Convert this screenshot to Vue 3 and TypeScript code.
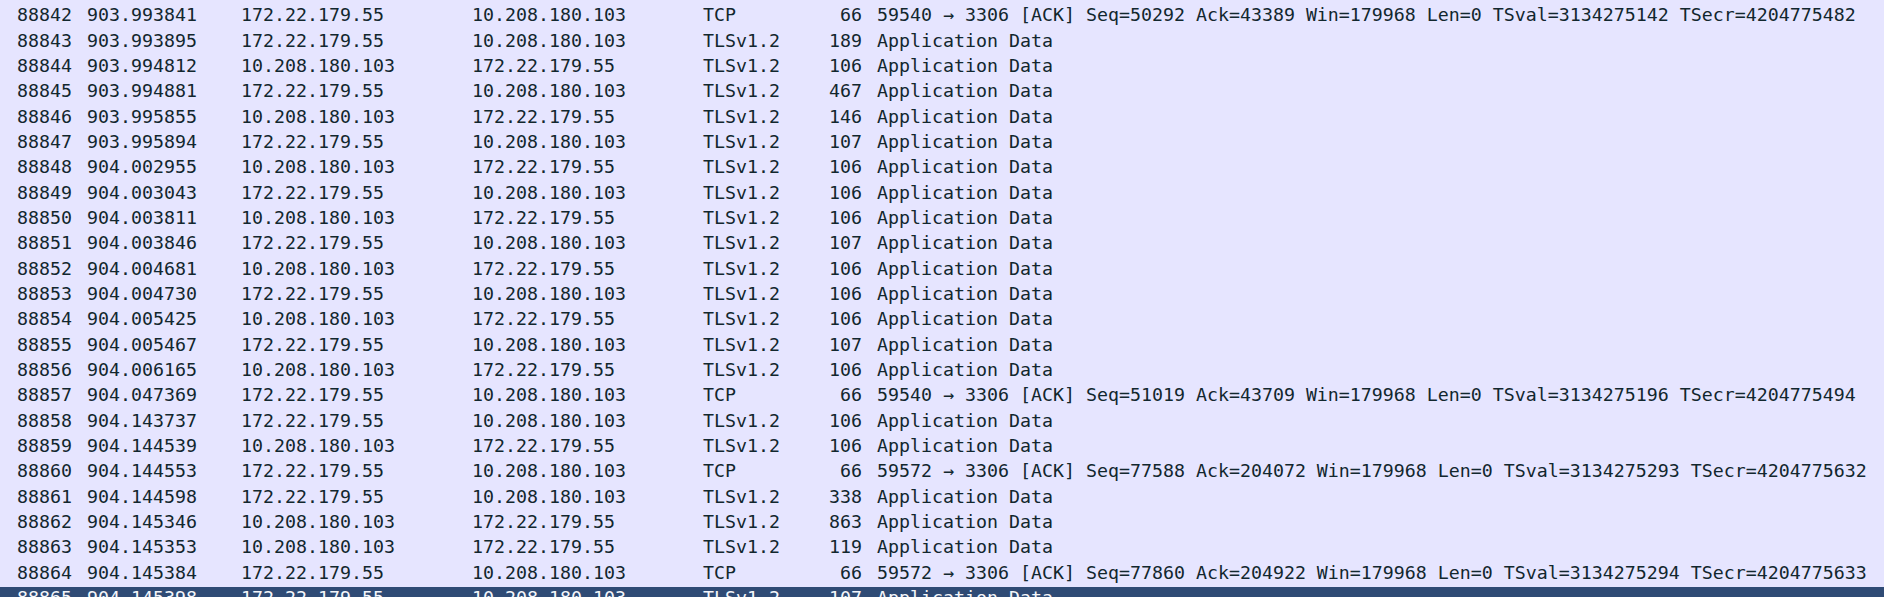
<script setup lang="ts">
interface Packet {
  no: number
  time: string
  src: string
  dst: string
  proto: string
  len: number
  info: string
  selected?: boolean
}

const A = '172.22.179.55'
const B = '10.208.180.103'
const APP = 'Application Data'

const ack = (port: number, seq: number, a: number, val: number, ecr: number) =>
  `${port} → 3306 [ACK] Seq=${seq} Ack=${a} Win=179968 Len=0 TSval=${val} TSecr=${ecr}`

const packets: Packet[] = [
  { no: 88842, time: '903.993841', src: A, dst: B, proto: 'TCP', len: 66, info: ack(59540, 50292, 43389, 3134275142, 4204775482) },
  { no: 88843, time: '903.993895', src: A, dst: B, proto: 'TLSv1.2', len: 189, info: APP },
  { no: 88844, time: '903.994812', src: B, dst: A, proto: 'TLSv1.2', len: 106, info: APP },
  { no: 88845, time: '903.994881', src: A, dst: B, proto: 'TLSv1.2', len: 467, info: APP },
  { no: 88846, time: '903.995855', src: B, dst: A, proto: 'TLSv1.2', len: 146, info: APP },
  { no: 88847, time: '903.995894', src: A, dst: B, proto: 'TLSv1.2', len: 107, info: APP },
  { no: 88848, time: '904.002955', src: B, dst: A, proto: 'TLSv1.2', len: 106, info: APP },
  { no: 88849, time: '904.003043', src: A, dst: B, proto: 'TLSv1.2', len: 106, info: APP },
  { no: 88850, time: '904.003811', src: B, dst: A, proto: 'TLSv1.2', len: 106, info: APP },
  { no: 88851, time: '904.003846', src: A, dst: B, proto: 'TLSv1.2', len: 107, info: APP },
  { no: 88852, time: '904.004681', src: B, dst: A, proto: 'TLSv1.2', len: 106, info: APP },
  { no: 88853, time: '904.004730', src: A, dst: B, proto: 'TLSv1.2', len: 106, info: APP },
  { no: 88854, time: '904.005425', src: B, dst: A, proto: 'TLSv1.2', len: 106, info: APP },
  { no: 88855, time: '904.005467', src: A, dst: B, proto: 'TLSv1.2', len: 107, info: APP },
  { no: 88856, time: '904.006165', src: B, dst: A, proto: 'TLSv1.2', len: 106, info: APP },
  { no: 88857, time: '904.047369', src: A, dst: B, proto: 'TCP', len: 66, info: ack(59540, 51019, 43709, 3134275196, 4204775494) },
  { no: 88858, time: '904.143737', src: A, dst: B, proto: 'TLSv1.2', len: 106, info: APP },
  { no: 88859, time: '904.144539', src: B, dst: A, proto: 'TLSv1.2', len: 106, info: APP },
  { no: 88860, time: '904.144553', src: A, dst: B, proto: 'TCP', len: 66, info: ack(59572, 77588, 204072, 3134275293, 4204775632) },
  { no: 88861, time: '904.144598', src: A, dst: B, proto: 'TLSv1.2', len: 338, info: APP },
  { no: 88862, time: '904.145346', src: B, dst: A, proto: 'TLSv1.2', len: 863, info: APP },
  { no: 88863, time: '904.145353', src: B, dst: A, proto: 'TLSv1.2', len: 119, info: APP },
  { no: 88864, time: '904.145384', src: A, dst: B, proto: 'TCP', len: 66, info: ack(59572, 77860, 204922, 3134275294, 4204775633) },
  { no: 88865, time: '904.145398', src: A, dst: B, proto: 'TLSv1.2', len: 107, info: APP, selected: true },
]
</script>

<template>
  <div class="list">
    <div v-for="p in packets" :key="p.no" class="row" :class="{ selected: p.selected }">
      <span class="num">{{ p.no }}</span>
      <span>{{ p.time }}</span>
      <span>{{ p.src }}</span>
      <span>{{ p.dst }}</span>
      <span>{{ p.proto }}</span>
      <span class="num">{{ p.len }}</span>
      <span>{{ p.info }}</span>
    </div>
  </div>
</template>

<style scoped>
.list {
  box-sizing: border-box;
  height: 597px;
  padding-top: 4.4px;
  overflow: hidden;
  background: #e6e5ff;
  color: #12272e;
  font-family: "DejaVu Sans Mono", monospace;
  font-size: 18.27px;
}
.row {
  display: grid;
  grid-template-columns: 72px 139px 216px 216px 84px 60px 1fr;
  column-gap: 15px;
  height: 25.33px;
  line-height: 22px;
  white-space: pre;
}
.num {
  text-align: right;
}
.selected {
  background: #2f4b75;
  color: #f4f6fa;
}
</style>

<style>
html, body {
  margin: 0;
  overflow: hidden;
}
</style>
